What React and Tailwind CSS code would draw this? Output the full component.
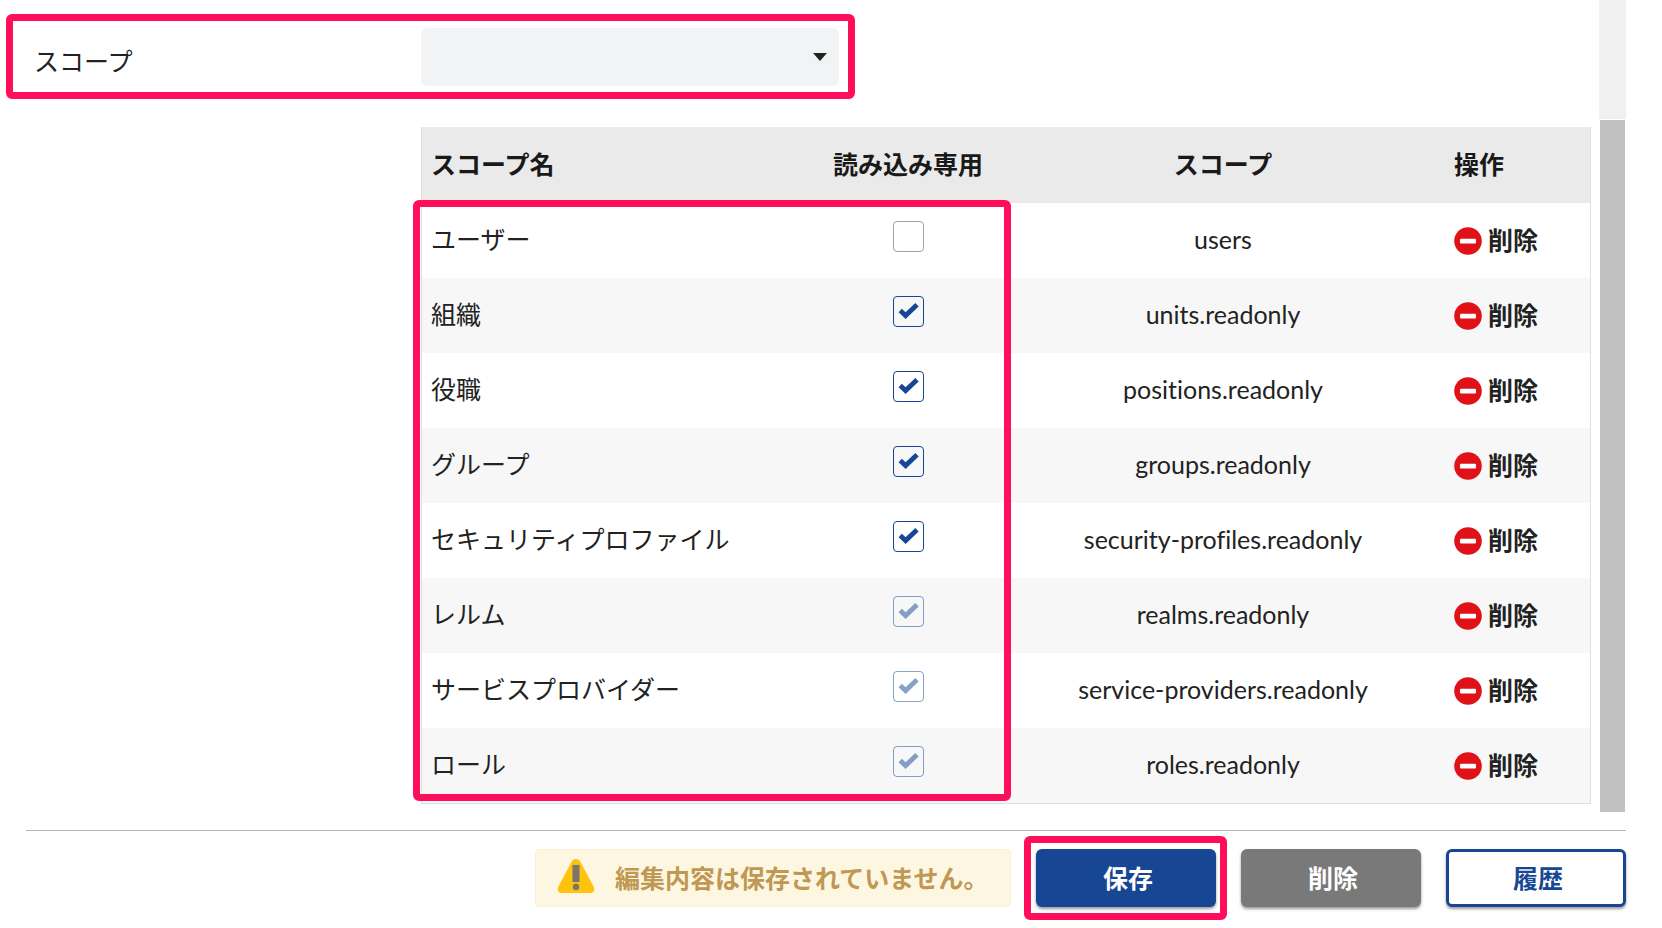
import { useState } from "react";

const initialScopes = [
  { id: "users", name: "ユーザー", scope: "users", readonly: false },
  { id: "units", name: "組織", scope: "units", readonly: true },
  { id: "positions", name: "役職", scope: "positions", readonly: true },
  { id: "groups", name: "グループ", scope: "groups", readonly: true },
  { id: "security-profiles", name: "セキュリティプロファイル", scope: "security-profiles", readonly: true },
  { id: "realms", name: "レルム", scope: "realms", readonly: true, locked: true },
  { id: "service-providers", name: "サービスプロバイダー", scope: "service-providers", readonly: true, locked: true },
  { id: "roles", name: "ロール", scope: "roles", readonly: true, locked: true },
];

const RemoveIcon = () => (
  <svg viewBox="0 0 28 28" className="w-7 h-7 shrink-0" aria-hidden="true">
    <circle cx="14" cy="14" r="13.8" fill="#e01217" />
    <rect x="6" y="11.8" width="16" height="4.6" rx="1" fill="#fff" />
  </svg>
);

const WarningIcon = () => (
  <svg viewBox="0 0 38 36" className="w-[38px] h-9 mb-1 shrink-0" aria-hidden="true">
    <path
      d="M14.8 3.4C16.4 .2 21.6 .2 23.2 3.4L36.6 28.6C38.2 32 36.8 35 33.6 35H4.4C1.2 35-.2 32 1.4 28.6Z"
      fill="#ffc20e"
    />
    <rect x="15.5" y="7" width="7" height="17" fill="#77776f" />
    <circle cx="19" cy="29" r="3.2" fill="#77776f" />
  </svg>
);

// 赤枠の強調表示
const Highlight = ({ className }) => (
  <div className={`absolute border-[7px] border-[#ff0f5b] rounded-md pointer-events-none ${className}`} />
);

const ReadonlyCheckbox = ({ item, onToggle }) => (
  <span className="inline-grid w-[31px] h-[31px] align-middle">
    <input
      type="checkbox"
      aria-label={`${item.name} 読み込み専用`}
      checked={item.readonly}
      disabled={item.locked}
      onChange={onToggle}
      className="peer col-start-1 row-start-1 appearance-none w-full h-full rounded-sm border border-[#a3a3a3] checked:border-[#164694] disabled:opacity-50"
    />
    <svg
      viewBox="0 0 31 31"
      className="col-start-1 row-start-1 w-full h-full pointer-events-none invisible peer-checked:visible peer-disabled:opacity-50"
      aria-hidden="true"
    >
      <path d="M7.2 14.6L12.6 19.6L24 8.8" fill="none" stroke="#164694" strokeWidth="4.8" />
    </svg>
  </span>
);

const App = () => {
  const [scopes, setScopes] = useState(initialScopes);

  const toggleReadonly = (id) => {
    setScopes((prev) => prev.map((s) => (s.id === id ? { ...s, readonly: !s.readonly } : s)));
  };

  const removeScope = (id) => {
    setScopes((prev) => prev.filter((s) => s.id !== id));
  };

  return (
    <div className="min-h-screen bg-white text-[#222] text-[25px] leading-9 font-['Lato','Noto_Sans_CJK_JP',sans-serif] [font-variant-ligatures:none] overflow-hidden">
      <div className="flex pr-9">
        <div className="flex-1 pl-[34px] pt-7 pr-2 pb-2">
          <div className="relative flex items-center h-[58px]">
            <label htmlFor="scope" className="w-[387px] pt-2">スコープ</label>
            <div className="relative w-[418px] h-full">
              <select id="scope" className="appearance-none w-full h-full rounded-md bg-[#f2f3f5] px-3">
                <option value=""></option>
              </select>
              <svg viewBox="0 0 14 8" className="absolute right-3 top-[25px] w-3.5 h-2 pointer-events-none" aria-hidden="true">
                <path d="M0 0H14L7 8Z" fill="#222" />
              </svg>
            </div>
            <Highlight className="-left-7 -top-3.5 w-[849px] h-[85px]" />
          </div>

          <div className="relative mt-[41px] ml-[387px]">
            <table className="w-full table-fixed border-separate border-spacing-0 border border-t-0 border-[#e0e0e0]">
              <thead>
                <tr className="h-[76px] bg-[#eaeaea] font-bold text-[#191919]">
                  <th className="px-[9px] pb-0.5 text-left">スコープ名</th>
                  <th className="w-[180px] pb-0.5">読み込み専用</th>
                  <th className="w-[450px] pb-0.5">スコープ</th>
                  <th className="w-[142px] px-1.5 pb-0.5 text-left">操作</th>
                </tr>
              </thead>
              <tbody>
                {scopes.map((item) => (
                  <tr key={item.id} className="h-[75px] even:bg-[#f7f7f7]">
                    <td className="px-[9px] pb-1">{item.name}</td>
                    <td className="pb-3.5 text-center">
                      <ReadonlyCheckbox item={item} onToggle={() => toggleReadonly(item.id)} />
                    </td>
                    <td className="pb-1 text-center">{item.readonly ? `${item.scope}.readonly` : item.scope}</td>
                    <td className="px-1.5">
                      <button type="button" onClick={() => removeScope(item.id)} className="flex items-center gap-1.5 font-bold">
                        <RemoveIcon />
                        <span className="pb-0.5">削除</span>
                      </button>
                    </td>
                  </tr>
                ))}
              </tbody>
            </table>
            <Highlight className="-left-2 top-[73px] bottom-[3px] w-[598px]" />
          </div>
        </div>

        {/* スクロールバー */}
        <div className="w-[27px] pt-[120px] bg-[linear-gradient(#f0f0f0_119px,#fff_119px)] flex justify-center">
          <div className="w-[25px] h-full bg-[#c1c1c1]" />
        </div>
      </div>

      <footer className="mt-[18px] ml-[26px] mr-9 pt-[18px] border-t-1 border-[#b0b6c8] flex justify-end font-bold">
        <p className="flex items-center gap-5 w-[476px] h-[58px] mr-[25px] pl-[21px] rounded border border-[#fbeed5] bg-[#fdf7e2] text-[#c09853] whitespace-nowrap">
          <WarningIcon />
          編集内容は保存されていません。
        </p>
        <div className="flex gap-[25px]">
          <div className="relative">
            <button type="button" className="w-[180px] h-[58px] pl-1 rounded-md bg-[#164694] text-white shadow-[0_2px_3px_rgba(0,0,0,0.4)]">
              保存
            </button>
            <Highlight className="-left-3 -right-[11px] -top-[13px] h-[84px]" />
          </div>
          <button type="button" className="w-[180px] h-[58px] pl-1 rounded-md bg-[#797979] text-white shadow-[0_2px_3px_rgba(0,0,0,0.4)]">
            削除
          </button>
          <button type="button" className="w-[180px] h-[58px] pl-1 rounded-md border-3 border-[#164694] bg-white text-[#164694] shadow-[0_2px_3px_rgba(0,0,0,0.4)]">
            履歴
          </button>
        </div>
      </footer>
    </div>
  );
};

export default App;
